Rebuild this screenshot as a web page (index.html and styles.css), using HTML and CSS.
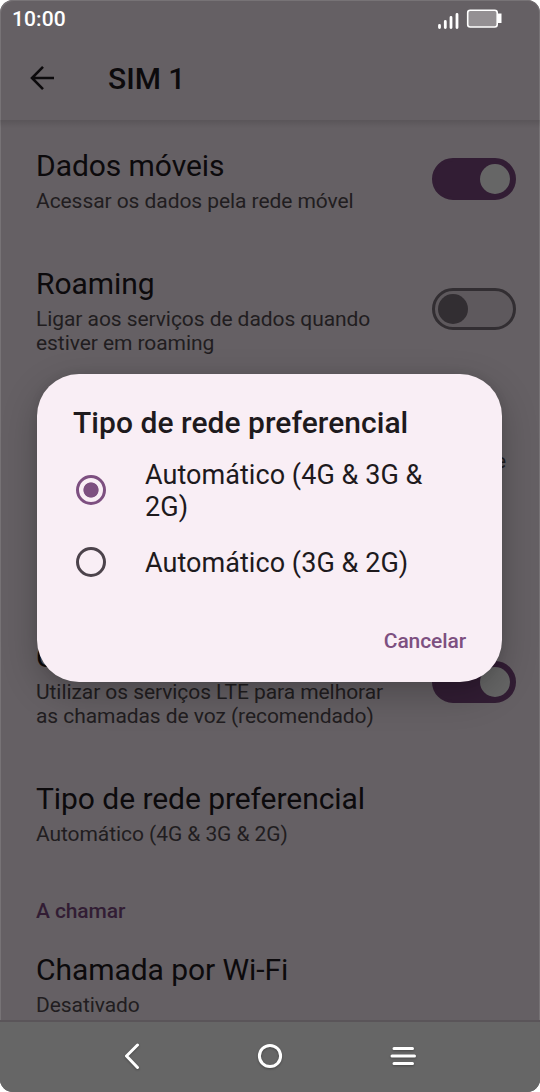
FILE: index.html
```
<!DOCTYPE html>
<html lang="pt">
<head>
<meta charset="utf-8">
<title>SIM 1</title>
<link rel="stylesheet" href="styles.css">
</head>
<body>
<div class="phone">
  <header class="status">
    <span class="time">10:00</span>
    <svg class="status-icons" width="66" height="24" viewBox="0 0 66 24">
      <g stroke="#fff" stroke-width="2.8" stroke-linecap="round"><path d="M2.5 20.500v2M8.300 16.500v6M14 12.500v10M20 9.500v13"/></g>
      <rect x="30.700" y="5.200" width="29.500" height="16.800" rx="2.500" fill="#949093" stroke="#fff" stroke-width="1.600"/>
      <path d="M61 8.500h3.500v9.500H61z" fill="#fff"/>
    </svg>
  </header>
  <div class="appbar">
    <svg width="26" height="26" viewBox="0 0 26 26" fill="none" stroke="#0c0a0c" stroke-width="2.600"><path d="M25 12H3.500M14 .9L3 12 14 23.100"/></svg>
    <h1 class="appbar-title">SIM 1</h1>
  </div>
  <main class="list">
    <section class="row row-data">
      <div class="texts"><h2 class="title">Dados móveis</h2><p class="sub">Acessar os dados pela rede móvel</p></div>
      <span class="switch on"></span>
    </section>
    <section class="row row-roaming">
      <div class="texts"><h2 class="title">Roaming</h2><p class="sub">Ligar aos serviços de dados quando<br>estiver em roaming</p></div>
      <span class="switch"></span>
    </section>
    <section class="row row-covered"><p class="sub">e</p></section>
    <section class="row row-volte">
      <div class="texts"><h2 class="title">C</h2><p class="sub">Utilizar os serviços LTE para melhorar<br>as chamadas de voz (recomendado)</p></div>
      <span class="switch on"></span>
    </section>
    <section class="row row-type">
      <div class="texts"><h2 class="title">Tipo de rede preferencial</h2><p class="sub">Automático (4G &amp; 3G &amp; 2G)</p></div>
    </section>
    <h3 class="category">A chamar</h3>
    <section class="row">
      <div class="texts"><h2 class="title">Chamada por Wi-Fi</h2><p class="sub">Desativado</p></div>
    </section>
  </main>
  <nav class="navbar">
    <svg width="540" height="70" viewBox="0 0 540 70" fill="none" stroke="#fff" stroke-width="3" stroke-linecap="round" stroke-linejoin="round">
      <path d="M137.500 23L126.500 34l11 11.500"/>
      <circle cx="270" cy="34" r="10.600"/>
      <path d="M394 26.500h18.500M392 34h22.500M394 41.500h18.500"/>
    </svg>
  </nav>
  <div class="dialog">
    <h2 class="dialog-title">Tipo de rede preferencial</h2>
    <div class="option"><span class="radio checked"></span><span class="label">Automático (4G &amp; 3G &amp;<br>2G)</span></div>
    <div class="option second"><span class="radio"></span><span class="label">Automático (3G &amp; 2G)</span></div>
    <div class="cancel">Cancelar</div>
  </div>
</div>
</body>
</html>
```
FILE: styles.css
```
* { box-sizing: border-box; }
body { margin: 0; background: #fff; font-family: Roboto, sans-serif; }
h1, h2, h3, p { margin: 0; font-weight: 400; white-space: nowrap; }
.phone { position: relative; width: 540px; height: 1092px; border-radius: 13px; overflow: hidden; background: #656064; box-shadow: inset 1px 1px 0 #777376, inset -1px 0 0 #777376; display: flex; flex-direction: column; }
.status { height: 40px; flex: none; padding: 5px 37px 0 12px; display: flex; justify-content: space-between; }
.time { color: #fff; font-size: 21px; line-height: 28px; font-weight: 500; letter-spacing: 0.1px; }
.appbar { height: 80px; flex: none; display: flex; align-items: center; gap: 53px; padding: 0 0 3px 29px; }
.appbar-title { color: #0c0a0c; font-size: 30px; font-weight: 500; line-height: 36px; }
.list { flex: 1; min-height: 0; overflow: hidden; padding: 28px 24px 0 36px; background: linear-gradient(rgba(0, 0, 0, .11), rgba(0, 0, 0, 0)) no-repeat 0 0 / 100% 8px; }
.row { display: flex; justify-content: space-between; align-items: center; }
.title { font-size: 30px; line-height: 36px; letter-spacing: -0.06px; color: #0c0a0c; }
.sub { font-size: 21px; line-height: 24px; margin-top: 5px; letter-spacing: -0.07px; color: #211d20; }
.row-roaming { margin-top: 53px; }
.row-covered { height: 284px; align-items: flex-start; justify-content: flex-end; padding: 89px 10px 0 0; }
.row-type { margin-top: 53px; }
.category { margin-top: 53px; font-size: 21px; line-height: 24px; font-weight: 500; letter-spacing: -0.1px; color: #321d34; }
.category + .row { margin-top: 29px; }
.switch { width: 84px; height: 42px; flex: none; margin-bottom: 4px; border-radius: 21px; border: 3px solid #322e32; background: #5e595d; padding: 3px; }
.switch::before { content: ""; display: block; width: 30px; height: 30px; border-radius: 50%; background: #322e32; }
.switch.on { background: #321d34; border-color: #321d34; }
.switch.on::before { margin-left: 42px; background: #666; }
.navbar { height: 72px; flex: none; background: #666; border-top: 2px solid #5a5559; }
.navbar svg { display: block; filter: drop-shadow(0 1px 1px rgba(0, 0, 0, .3)); }
.dialog { position: absolute; left: 37px; top: 374px; width: 465px; height: 308px; border-radius: 42px; background: #f9eef5; box-shadow: 0 12px 36px rgba(0, 0, 0, .24), 0 0 10px rgba(0, 0, 0, .08); padding: 31px 36px 0; color: #1e1a1d; }
.dialog-title { font-size: 30px; line-height: 36px; font-weight: 500; letter-spacing: 0.04px; }
.option { display: flex; align-items: center; gap: 39px; height: 64px; margin-top: 17px; padding-left: 3px; font-size: 27px; line-height: 32px; letter-spacing: 0.05px; white-space: nowrap; }
.label { padding-top: 2px; }
.option.second { height: 32px; margin-top: 24px; }
.radio { width: 30px; height: 30px; flex: none; border: 3px solid #4c434b; border-radius: 50%; display: grid; place-items: center; }
.radio.checked { border-color: #7d4f80; background: radial-gradient(circle, #7d4f80 7.2px, transparent 8px); }
.cancel { margin-top: 51px; text-align: right; font-size: 21px; line-height: 24px; font-weight: 500; letter-spacing: -0.1px; color: #7d4f80; }
```
